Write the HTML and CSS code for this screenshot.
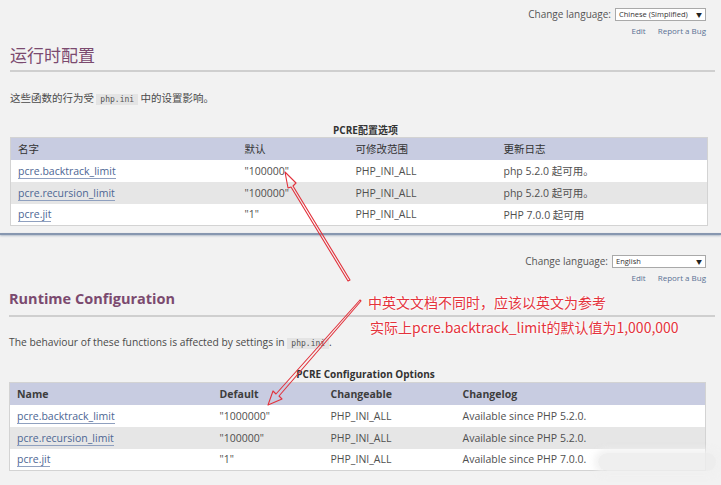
FILE: index.html
```html
<!DOCTYPE html>
<html lang="zh">
<head>
<meta charset="utf-8">
<link rel="stylesheet" href="styles.css">
</head>
<body>
<div class="shot">
  <section class="panel panel-top">
    <div class="langbar">
      <span class="lang-label">Change language:</span>
      <div class="select select-zh"><span>Chinese (Simplified)</span><span class="caret">▼</span></div>
    </div>
    <div class="links"><a>Edit</a><a>Report a Bug</a></div>
    <h1 class="title title-zh">运行时配置</h1>
    <p class="intro intro-zh">这些函数的行为受 <code>php.ini</code> 中的设置影响。</p>
    <div class="caption caption-zh">PCRE配置选项</div>
    <table class="conf conf-zh">
      <colgroup><col class="c1"><col class="c2"><col class="c3"><col class="c4"></colgroup>
      <thead><tr><th>名字</th><th>默认</th><th>可修改范围</th><th>更新日志</th></tr></thead>
      <tbody>
        <tr><td><a>pcre.backtrack_limit</a></td><td>"100000"</td><td>PHP_INI_ALL</td><td>php 5.2.0 起可用。</td></tr>
        <tr><td><a>pcre.recursion_limit</a></td><td>"100000"</td><td>PHP_INI_ALL</td><td>php 5.2.0 起可用。</td></tr>
        <tr><td><a>pcre.jit</a></td><td>"1"</td><td>PHP_INI_ALL</td><td>PHP 7.0.0 起可用</td></tr>
      </tbody>
    </table>
  </section>
  <div class="divider"></div>
  <section class="panel panel-bottom">
    <div class="langbar">
      <span class="lang-label">Change language:</span>
      <div class="select select-en"><span>English</span><span class="caret">▼</span></div>
    </div>
    <div class="links"><a>Edit</a><a>Report a Bug</a></div>
    <h1 class="title title-en">Runtime Configuration</h1>
    <p class="intro intro-en">The behaviour of these functions is affected by settings in <code>php.ini</code>.</p>
    <div class="caption caption-en">PCRE Configuration Options</div>
    <table class="conf conf-en">
      <colgroup><col class="d1"><col class="d2"><col class="d3"><col class="d4"></colgroup>
      <thead><tr><th>Name</th><th>Default</th><th>Changeable</th><th>Changelog</th></tr></thead>
      <tbody>
        <tr><td><a>pcre.backtrack_limit</a></td><td>"1000000"</td><td>PHP_INI_ALL</td><td>Available since PHP 5.2.0.</td></tr>
        <tr><td><a>pcre.recursion_limit</a></td><td>"100000"</td><td>PHP_INI_ALL</td><td>Available since PHP 5.2.0.</td></tr>
        <tr><td><a>pcre.jit</a></td><td>"1"</td><td>PHP_INI_ALL</td><td>Available since PHP 7.0.0.</td></tr>
      </tbody>
    </table>
  </section>

  <svg class="arrows" width="721" height="485" viewBox="0 0 721 485">
    <g fill="none" stroke="#e2323c" stroke-width="1.1" stroke-linejoin="round">
      <path d="M350 280 L293 186 L296 183 L285 172 L288 188 L291 187 L348 281 Z"/>
      <path d="M360 300 L276 394 L273 391 L268 405 L282 399 L279 396 L361 301 Z"/>
    </g>
  </svg>

  <div class="note">
    <div class="note-line">中英文文档不同时，应该以英文为参考</div>
    <div class="note-line">实际上pcre.backtrack_limit的默认值为1,000,000</div>
  </div>

  <div class="watermark"></div>
</div>
</body>
</html>
```
FILE: styles.css
```css
html, body {
  margin: 0;
  padding: 0;
  background: #f2f2f2;
}
body {
  font-family: "Open Sans", "Noto Sans CJK SC", sans-serif;
  color: #4a4a4a;
}
.shot {
  position: relative;
  width: 721px;
  height: 485px;
  overflow: hidden;
}
.panel {
  display: flex;
  flex-direction: column;
}
.panel-top {
  height: 233px;
}
.langbar {
  display: flex;
  justify-content: flex-end;
  align-items: center;
  gap: 4px;
  padding-right: 15px;
  height: 16px;
  font-size: 10px;
  color: #555;
}
.panel-top .langbar { margin-top: 6px; }
.panel-bottom .langbar { margin-top: 18px; }
.select {
  height: 13px;
  box-sizing: border-box;
  border: 1px solid #a9a9a9;
  background: #fff;
  display: flex;
  align-items: center;
  justify-content: space-between;
  padding: 0 3px;
  font-size: 7.5px;
  color: #333;
}
.select-zh { width: 91px; }
.select-en { width: 94px; }
.caret { font-size: 6px; color: #222; }
.links {
  display: flex;
  justify-content: flex-end;
  gap: 12px;
  padding-right: 15px;
  font-size: 8px;
  color: #5a7194;
  margin-top: 1px;
  height: 14px;
  align-items: center;
}
.title {
  margin: 0 6px 0 10px;
  color: #7b4a6f;
  font-weight: normal;
  border-bottom: 2px solid #cfcfcf;
}
.title-zh {
  font-family: "Noto Sans CJK SC", sans-serif;
  font-size: 17px;
  line-height: 22px;
  padding: 7px 0 4px;
  margin-top: 0;
}
.title-en {
  font-size: 14.5px;
  font-weight: bold;
  line-height: 20px;
  padding: 5px 0 6px;
  margin-left: 9px;
  margin-top: 0;
}
.intro {
  margin: 0 10px;
  font-size: 10px;
  color: #4a4a4a;
}
.intro-zh {
  margin-top: 18px;
  font-family: "Noto Sans CJK SC", sans-serif;
  font-size: 10.5px;
}
.intro-en {
  margin-top: 18px;
  margin-left: 9px;
  font-size: 10.3px;
}
code {
  font-family: "DejaVu Sans Mono", monospace;
  font-size: 8px;
  background: #e4e4e4;
  padding: 1px 4px;
  color: #555;
}
.caption {
  text-align: center;
  font-weight: bold;
  font-size: 10px;
  color: #333;
  padding-left: 10px;
}
.caption-zh { margin-top: 17px; }
.caption-en { margin-top: 18px; }
.conf {
  border-collapse: collapse;
  border: 1px solid #d3d3d3;
  table-layout: fixed;
  font-size: 10.5px;
}
.conf-zh { width: 697px; margin-left: 10px; margin-top: 0; }
.conf-en { width: 696px; margin-left: 9px; margin-top: 1px; }
.c1 { width: 227px; } .c2 { width: 111px; } .c3 { width: 148px; } .c4 { width: 211px; }
.d1 { width: 203px; } .d2 { width: 111px; } .d3 { width: 132px; } .d4 { width: 250px; }
.conf th, .conf td {
  text-align: left;
  padding: 0 7px;
  height: 22px;
  box-sizing: border-box;
  white-space: nowrap;
}
.conf th {
  background: #c8cce1;
  color: #3d3d3d;
  font-weight: bold;
}
.conf-zh th { font-weight: normal; font-family: "Noto Sans CJK SC", sans-serif; color: #333; }
.conf tbody tr:nth-child(odd) td { background: #ffffff; }
.conf tbody tr:nth-child(even) td { background: #e6e6e6; }
.conf td { color: #4f4f4f; }
.conf a {
  color: #4d6694;
  border-bottom: 1px solid #8fa0bf;
}
.divider {
  height: 2px;
  background: #8797b0;
  box-shadow: 0 1px 2px rgba(100,120,150,0.45);
}
.arrows {
  position: absolute;
  left: 0;
  top: 0;
}
.note {
  position: absolute;
  left: 368px;
  top: 292px;
  display: flex;
  flex-direction: column;
  gap: 5px;
  font-family: "Noto Sans CJK SC", sans-serif;
  font-size: 14px;
  line-height: 20px;
  color: #e4333c;
  text-shadow: 0 0 2px #fff, 0 0 3px #fff, 0 0 4px #fff;
}
.note-line:last-child { margin-left: 2px; }
.watermark {
  position: absolute;
  left: 598px;
  top: 453px;
  width: 118px;
  height: 18px;
  border-radius: 9px;
  background: rgba(236,236,236,0.85);
  box-shadow: 0 0 6px 4px rgba(240,240,240,0.85);
}
```
